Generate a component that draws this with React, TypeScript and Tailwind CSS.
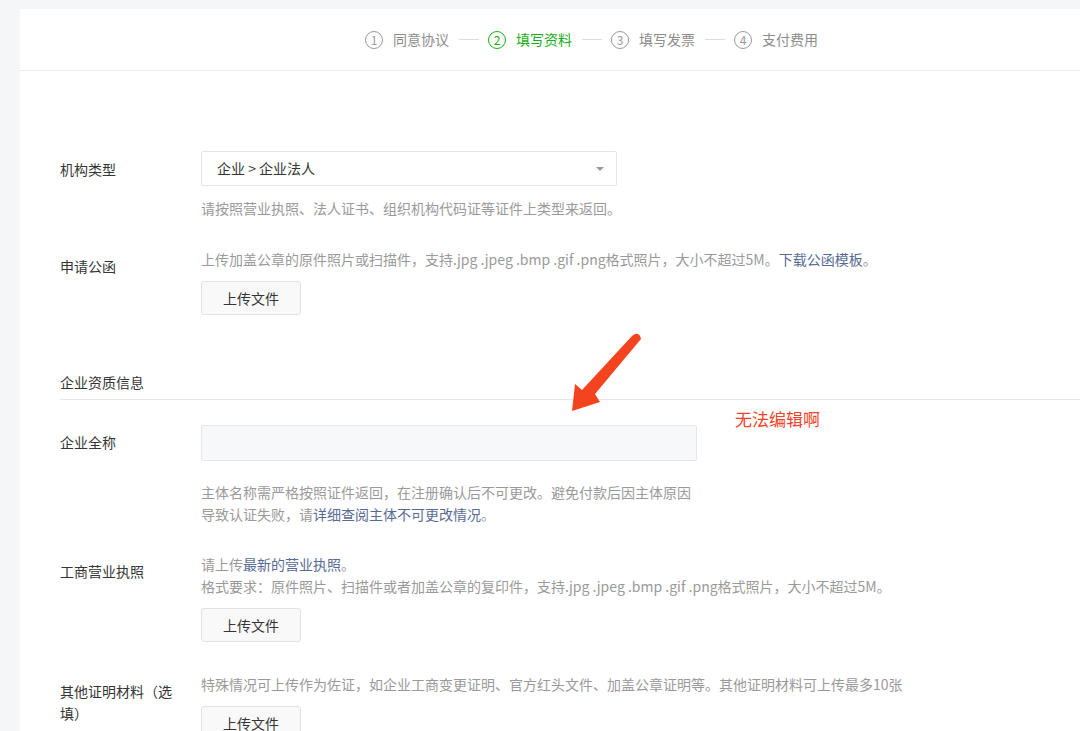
import React from "react";

const steps = [
  { n: "1", label: "同意协议" },
  { n: "2", label: "填写资料", active: true },
  { n: "3", label: "填写发票" },
  { n: "4", label: "支付费用" },
];

const UploadButton = () => (
  <button className="mt-[11px] w-[100px] h-[34px] rounded-[3px] border border-[#e2e2e2] bg-[#f9f9f9] text-[14px] text-[#353535]">
    上传文件
  </button>
);

const Label = ({ children }: { children: React.ReactNode }) => (
  <div className="w-[120px] mr-[21px] shrink-0 pt-[7px] leading-[22px] text-[14px] text-[#353535]">{children}</div>
);

const App = () => {
  return (
    <div
      className="relative h-[731px] overflow-hidden bg-[#f5f6f8] pt-[9px] pl-[20px]"
      style={{ fontFamily: '"Noto Sans CJK SC", "Noto Sans", sans-serif' }}
    >
      <div className="bg-white h-[800px]">
        {/* steps */}
        <div className="h-[62px] border-b border-[#ebebee] flex items-center pl-[345px]">
          {steps.map((s, i) => (
            <div key={s.n} className="flex items-center">
              <span
                className={
                  s.active
                    ? "w-[18px] h-[18px] rounded-full border border-[#1aad19] text-[#1aad19] text-[12px] leading-none flex items-center justify-center"
                    : "w-[18px] h-[18px] rounded-full border border-[#9a9a9a] text-[#9a9a9a] text-[12px] leading-none flex items-center justify-center"
                }
              >
                {s.n}
              </span>
              <span className={s.active ? "ml-[10px] text-[14px] text-[#1aad19]" : "ml-[10px] text-[14px] text-[#8d8d8d]"}>
                {s.label}
              </span>
              {i < steps.length - 1 && <span className="ml-[10px] mr-[9px] w-[20px] h-px bg-[#dcdcdc]" />}
            </div>
          ))}
        </div>

        <div className="pl-[40px] pt-[80px]">
          {/* 机构类型 */}
          <div className="flex">
            <Label>机构类型</Label>
            <div>
              <div className="w-[416px] h-[35px] border border-[#e4e4e6] rounded-[2px] flex items-center justify-between pl-[15px] pr-[12px]">
                <span className="text-[14px] text-[#353535]">企业 &gt; 企业法人</span>
                <span className="w-0 h-0 border-l-[4px] border-r-[4px] border-t-[4px] border-l-transparent border-r-transparent border-t-[#9a9a9a]" />
              </div>
              <p className="mt-[11px] leading-[22px] text-[14px] text-[#9a9a9a]">
                请按照营业执照、法人证书、组织机构代码证等证件上类型来返回。
              </p>
            </div>
          </div>

          {/* 申请公函 */}
          <div className="flex mt-[29px]">
            <Label>申请公函</Label>
            <div>
              <p className="leading-[22px] text-[14px] text-[#9a9a9a]">
                上传加盖公章的原件照片或扫描件，支持.jpg .jpeg .bmp .gif .png格式照片，大小不超过5M。
                <span className="text-[#576b95]">下载公函模板</span>。
              </p>
              <UploadButton />
            </div>
          </div>

          {/* section */}
          <div className="mt-[56px] border-b border-[#e7e7eb] pb-[6px] leading-[22px] text-[14px] text-[#353535]">
            企业资质信息
          </div>

          {/* 企业全称 */}
          <div className="flex mt-[25px]">
            <div className="w-[120px] mr-[21px] shrink-0 pt-[6px] leading-[22px] text-[14px] text-[#353535]">企业全称</div>
            <div>
              <div className="w-[496px] h-[36px] border border-[#e7e7eb] rounded-[2px] bg-[#f6f8fa]" />
              <p className="mt-[20px] leading-[22px] text-[14px] text-[#9a9a9a]">
                主体名称需严格按照证件返回，在注册确认后不可更改。避免付款后因主体原因
                <br />
                导致认证失败，请<span className="text-[#576b95]">详细查阅主体不可更改情况</span>。
              </p>
            </div>
          </div>

          {/* 工商营业执照 */}
          <div className="flex mt-[28px]">
            <Label>工商营业执照</Label>
            <div>
              <p className="leading-[22px] text-[14px] text-[#9a9a9a]">
                请上传<span className="text-[#576b95]">最新的营业执照</span>。
                <br />
                格式要求：原件照片、扫描件或者加盖公章的复印件，支持.jpg .jpeg .bmp .gif .png格式照片，大小不超过5M。
              </p>
              <UploadButton />
            </div>
          </div>

          {/* 其他证明材料 */}
          <div className="flex mt-[31px]">
            <Label>其他证明材料（选填）</Label>
            <div>
              <p className="leading-[22px] text-[14px] text-[#9a9a9a]">
                特殊情况可上传作为佐证，如企业工商变更证明、官方红头文件、加盖公章证明等。其他证明材料可上传最多10张
              </p>
              <UploadButton />
            </div>
          </div>
        </div>
      </div>

      {/* annotation */}
      <svg className="absolute left-[560px] top-[325px]" width="90" height="95" viewBox="0 0 90 95">
        <path
          d="M75 9 Q80 8 81 14 L35 69 L40 77 L12 86 L15 59 L22 65 L72 11 Z"
          fill="#f4431f"
        />
      </svg>
      <span className="absolute left-[735px] top-[406px] text-[17px] leading-[26px] text-[#f0432a]">无法编辑啊</span>
    </div>
  );
};

export default App;
